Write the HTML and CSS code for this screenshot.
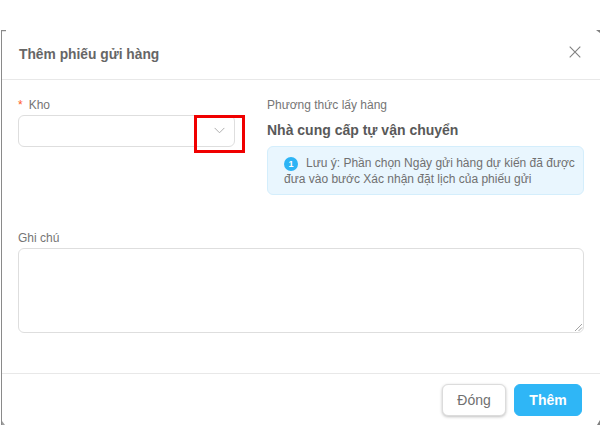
FILE: index.html
```html
<!DOCTYPE html>
<html lang="vi">
<head>
<meta charset="utf-8">
<title>Thêm phiếu gửi hàng</title>
<link rel="stylesheet" href="styles.css">
</head>
<body>
<div class="modal">
  <span class="corner corner-tl"></span>
  <span class="corner corner-tr"></span>
  <span class="corner corner-bl"></span>
  <span class="corner corner-br"></span>
  <header class="modal-header">
    <h1 class="modal-title">Thêm phiếu gửi hàng</h1>
    <svg class="close" viewBox="0 0 12 12" width="12" height="12" aria-hidden="true"><path d="M.7.7l10.6 10.6M11.3.7L.7 11.3"/></svg>
  </header>
  <main class="modal-body">
    <div class="columns">
      <div class="col-left">
        <div class="label label-top"><span class="req">*</span>Kho</div>
        <div class="select">
          <svg class="chev" viewBox="0 0 12 7" width="11" height="7" aria-hidden="true"><path d="M.7.7L6 6l5.3-5.3"/></svg>
          <div class="highlight"></div>
        </div>
      </div>
      <div class="col-right">
        <div class="label label-top">Phương thức lấy hàng</div>
        <div class="method">Nhà cung cấp tự vận chuyển</div>
        <div class="alert">
          <p class="alert-line"><span class="badge">1</span>Lưu ý: Phần chọn Ngày gửi hàng dự kiến đã được</p>
          <p class="alert-line">đưa vào bước Xác nhận đặt lịch của phiếu gửi</p>
        </div>
      </div>
    </div>
    <div class="note">
      <div class="label">Ghi chú</div>
      <div class="textarea">
        <svg class="grip" viewBox="0 0 9 9" width="9" height="9" aria-hidden="true"><path d="M1 8l7-7M4.500 8L8 4.500"/></svg>
      </div>
    </div>
  </main>
  <footer class="modal-footer">
    <button class="btn btn-default">Đóng</button>
    <button class="btn btn-primary">Thêm</button>
  </footer>
</div>
</body>
</html>
```
FILE: styles.css
```css
* { box-sizing: border-box; }
html, body { margin: 0; height: 425px; overflow: hidden; background: #fff; }
body {
  padding: 30px 0 0 1px;
  font-family: "Liberation Sans", Arial, sans-serif;
  color: #666;
}
.modal {
  position: relative;
  height: 395px;
  background: #fff;
  border-left: 1px solid #8a8a8a;
  display: flex;
  flex-direction: column;
}
.corner { position: absolute; display: block; }
.corner-tl { left: 0; top: 0; width: 4px; height: 2px; background: linear-gradient(#8a8a8a 50%, #e4e4e4 50%); }
.corner-tr { right: 0; top: 0; width: 4px; height: 3px; background: #808080; clip-path: polygon(0 0, 100% 0, 100% 100%); }
.corner-bl { left: 0; bottom: 0; width: 3px; height: 4px; background: #a0a0a0; clip-path: polygon(0 0, 100% 100%, 0 100%); }
.corner-br { right: 0; bottom: 0; width: 3px; height: 5px; background: #808080; clip-path: polygon(100% 0, 100% 100%, 0 100%); }
.modal-header {
  height: 50px;
  border-bottom: 1px solid #e8e8e8;
  display: flex;
  align-items: center;
  justify-content: space-between;
  padding: 0 19px 0 17px;
  flex: none;
}
.modal-title { margin: 0; font-size: 13.8px; font-weight: 700; color: #666; line-height: 49px; }
.close { fill: none; stroke: #808080; stroke-width: 1.1; margin-top: -5px; }
.modal-body { flex: 1; padding: 16px 16px 0 16px; }
.columns { display: flex; gap: 32px; height: 134px; }
.col-left { width: 217px; flex: none; }
.col-right { flex: 1; }
.label { font-size: 12px; line-height: 16px; color: #757575; height: 19px; }
.label-top { line-height: 18px; }
.req { color: #ff5a1f; margin-right: 6px; font-size: 12px; }
.select {
  position: relative;
  height: 32px;
  border: 1px solid #dedede;
  border-radius: 6px;
  display: flex;
  align-items: center;
  justify-content: flex-end;
  padding-right: 9px;
}
.chev { fill: none; stroke: #a6a6a6; stroke-width: 1; margin-top: -2px; }
.highlight {
  position: absolute;
  left: 175px;
  top: -1px;
  width: 51px;
  height: 38px;
  border: 3px solid #f00000;
}
.method { font-size: 14px; font-weight: 700; color: #595959; line-height: 18px; margin-top: 6px; height: 22px; }
.alert {
  margin-top: 3px;
  height: 49px;
  background: #e9f6fe;
  border: 1px solid #d4eefc;
  border-radius: 6px;
  padding: 8px 0 0 16px;
}
.alert-line { margin: 0; font-size: 12px; line-height: 16px; color: #707070; white-space: nowrap; }
.badge {
  display: inline-block;
  width: 14px;
  height: 14px;
  border-radius: 50%;
  background: #2db4f5;
  color: #fff;
  font-size: 9px;
  font-weight: 700;
  line-height: 14px;
  text-align: center;
  margin-right: 8px;
}
.note .label { height: 18px; line-height: 17px; }
.textarea {
  position: relative;
  height: 85px;
  border: 1px solid #dedede;
  border-radius: 6px;
}
.grip { position: absolute; right: 0; bottom: 0; fill: none; stroke: #8c8c8c; stroke-width: 0.8; }
.modal-footer {
  flex: none;
  height: 52px;
  border-top: 1px solid #e8e8e8;
  display: flex;
  justify-content: flex-end;
  align-items: flex-start;
  gap: 8px;
  padding: 10px 18px 0 0;
}
.btn {
  height: 32px;
  border-radius: 6px;
  font-family: inherit;
  font-size: 14px;
  padding: 0;
}
.btn-default {
  width: 64px;
  background: #fff;
  border: 1px solid #dcdcdc;
  color: #707070;
  box-shadow: 0 1px 3px rgba(0,0,0,.25);
}
.btn-primary {
  width: 68px;
  background: #2fb6f6;
  border: 1px solid #2fb6f6;
  color: #fff;
  font-weight: 700;
}
```
